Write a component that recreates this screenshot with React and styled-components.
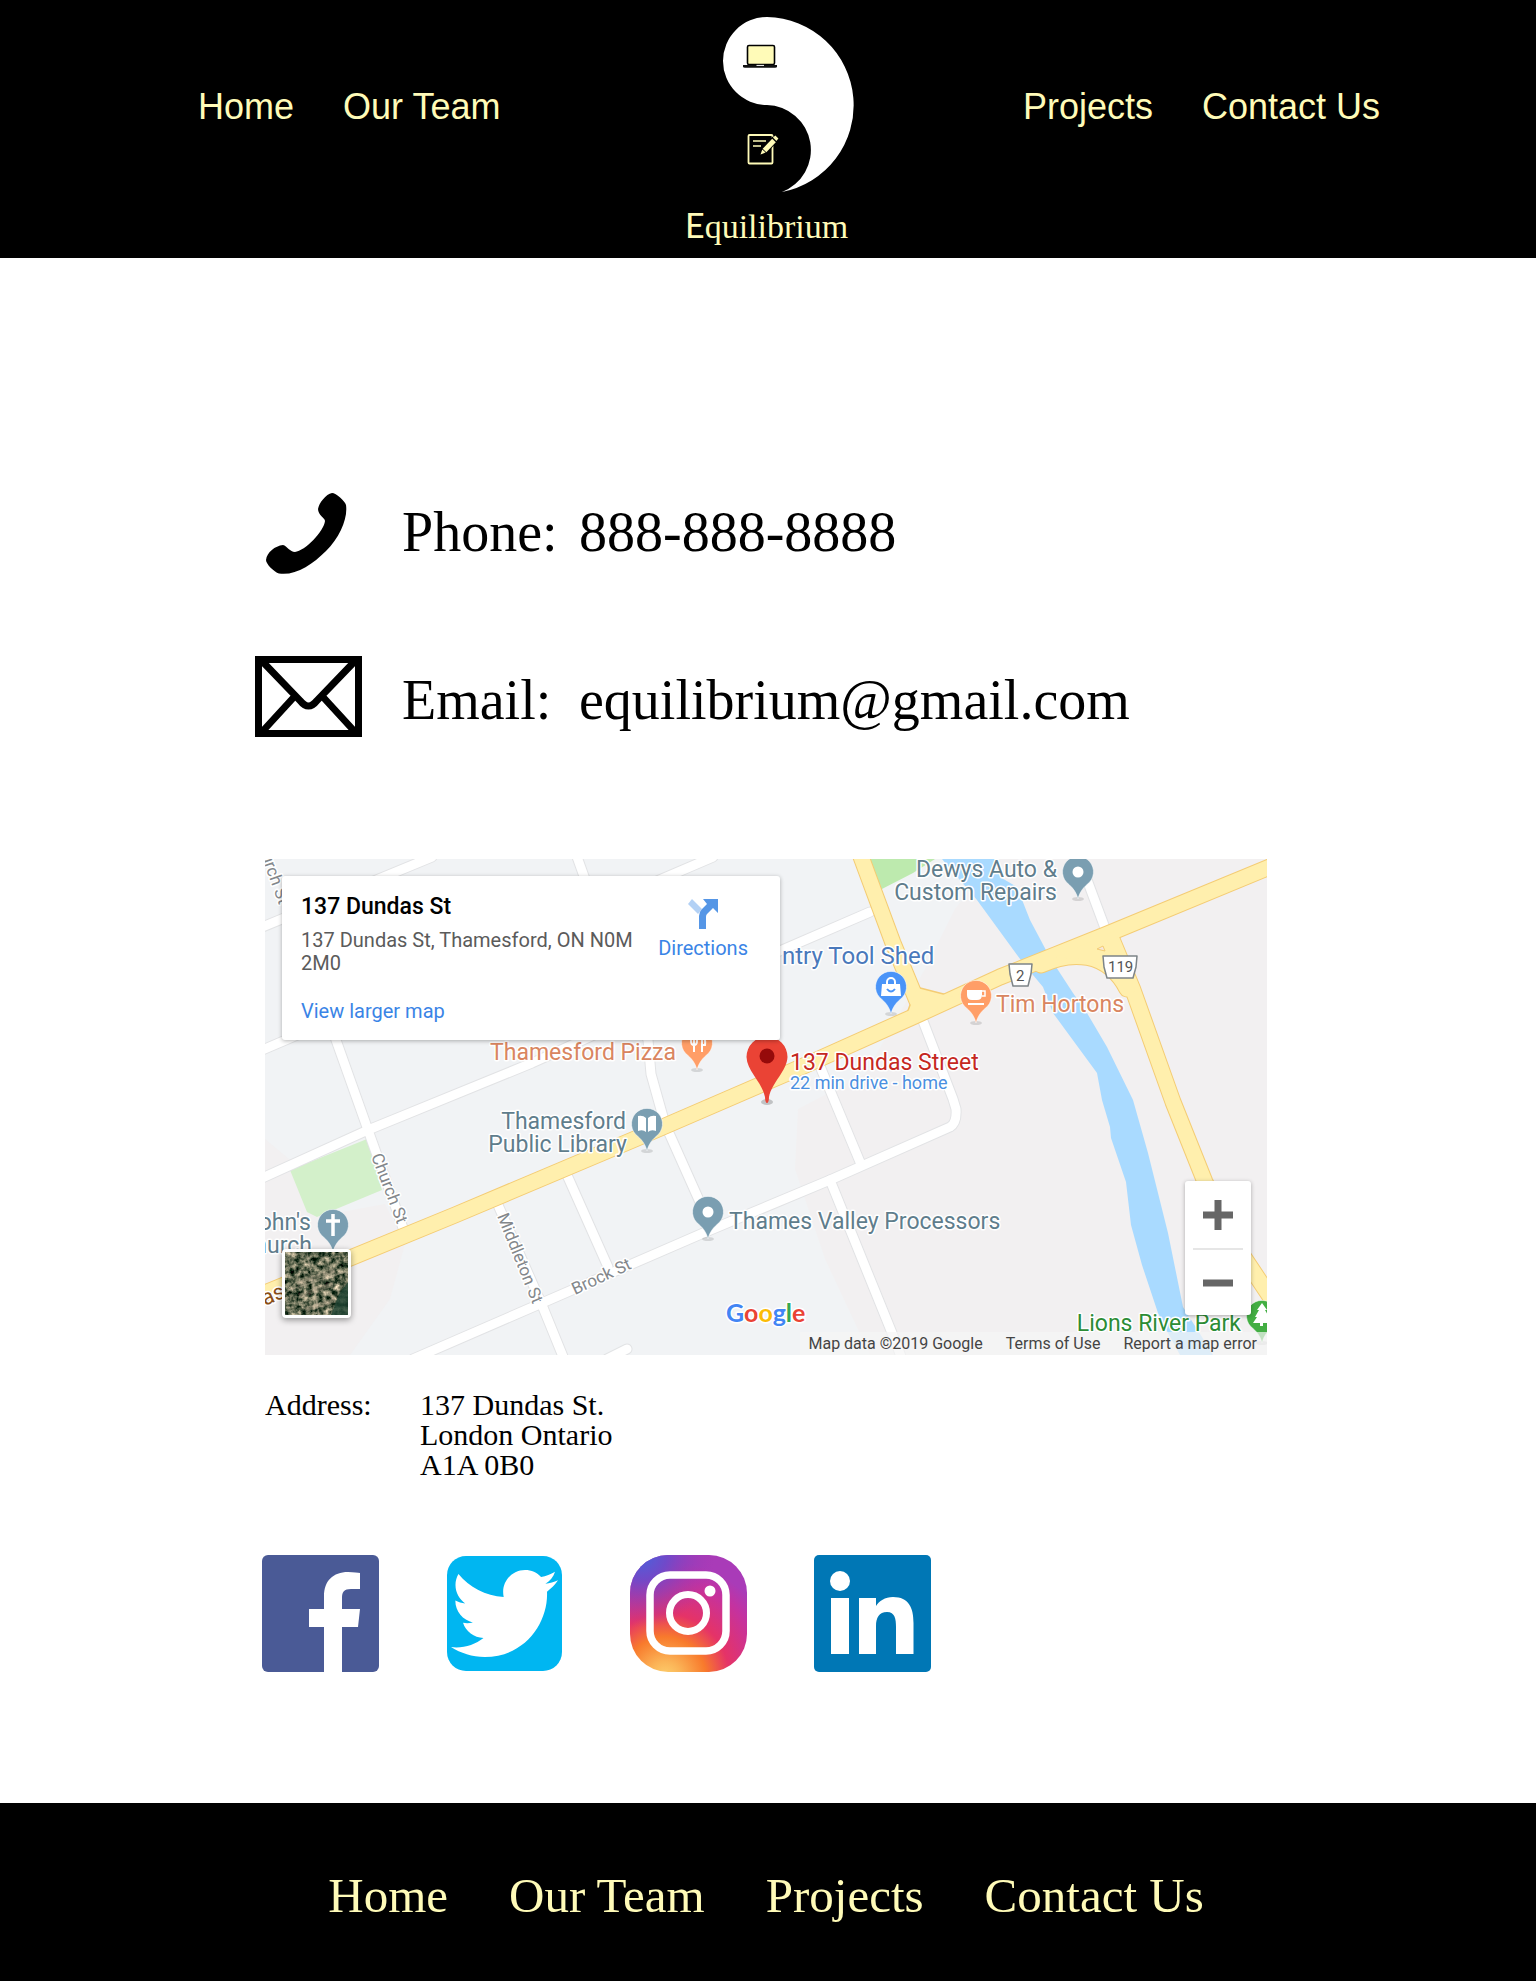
import React from "react";
import styled, { createGlobalStyle } from "styled-components";
import { FaTwitter } from "react-icons/fa";

const cream = "#fffbb8";
const serif = '"Liberation Serif", "Times New Roman", serif';
const sans = '"Liberation Sans", Arial, sans-serif';
const roboto = 'Roboto, "Liberation Sans", sans-serif';

const GlobalStyle = createGlobalStyle`
  *, *::before, *::after { box-sizing: border-box; }
  body { margin: 0; background: #fff; color: #000; font-family: ${serif}; }
  a { color: inherit; text-decoration: none; }
  svg { display: block; }
`;

const Header = styled.header`
  display: grid;
  grid-template-columns: 1fr auto 1fr;
  padding: 17px 156px 12px;
  background: #000;
  color: ${cream};
`;

const HeaderNav = styled.nav`
  display: flex;
  justify-content: ${(p) => (p.$end ? "flex-end" : "flex-start")};
  gap: 49px;
  padding: 70px 0 0 ${(p) => (p.$end ? "0" : "42px")};
  font: 36px/40px ${sans};
  white-space: nowrap;
`;

const Brand = styled.a`
  display: flex;
  flex-direction: column;
  align-items: flex-end;
  gap: 18px;
  width: 172px;
`;

const BrandName = styled.span`
  align-self: flex-start;
  height: 36px;
  padding-left: 3px;
  font: 34px/34px ${serif};
  white-space: nowrap;
`;

const Initial = styled.span`
  font-family: Lato, ${sans};
  line-height: 1px;
`;

const Main = styled.main`
  padding: 235px 269px 131px 255px;
`;

const ContactList = styled.dl`
  display: flex;
  flex-direction: column;
  gap: 82px;
  margin: 0;
`;

const ContactRow = styled.div`
  display: grid;
  grid-template-columns: 147px 177px auto;
  align-items: center;
  font: 56px/64px ${serif};
`;

const IconSlot = styled.div`
  display: flex;
  justify-content: center;
  width: 107px;
`;

const Term = styled.dt`
  margin: 0;
  padding-bottom: 4px;
`;

const Detail = styled.dd`
  margin: 0;
  padding-bottom: 4px;
`;

const MapFrame = styled.section`
  position: relative;
  margin: 112px 0 0 10px;
  overflow: hidden;
  font-family: ${roboto};
`;

const MapSvg = styled.svg`
  width: 100%;
  height: auto;
`;

const PlaceCard = styled.div`
  position: absolute;
  top: 17px;
  left: 17px;
  display: flex;
  justify-content: space-between;
  width: 498px;
  height: 164px;
  padding: 17px 32px 15px 19px;
  border-radius: 3px;
  background: #fff;
  box-shadow: 0 1px 4px rgba(0, 0, 0, 0.3);
`;

const PlaceText = styled.div`
  display: flex;
  flex-direction: column;
  width: 336px;
`;

const PlaceTitle = styled.h2`
  margin: 0 0 8px;
  font-size: 23px;
  line-height: 28px;
  font-weight: 500;
`;

const PlaceAddress = styled.p`
  margin: 0 0 24px;
  font-size: 20px;
  line-height: 23px;
  color: #5b5b5b;
`;

const MapLink = styled.a`
  font-size: 20px;
  line-height: 24px;
  color: #3a84e6;
`;

const Directions = styled.a`
  display: flex;
  flex-direction: column;
  align-items: center;
  gap: 7px;
  padding-top: 6px;
  font-size: 20px;
  line-height: 24px;
  color: #3a84e6;
`;

const ZoomBox = styled.div`
  position: absolute;
  right: 16px;
  bottom: 40px;
  width: 66px;
  padding: 0 8px;
  border-radius: 3px;
  background: #fff;
  box-shadow: 0 1px 4px rgba(0, 0, 0, 0.3);
`;

const ZoomButton = styled.button`
  display: flex;
  align-items: center;
  justify-content: center;
  width: 50px;
  height: 67px;
  padding: 0;
  border: 0;
  background: none;
  & + & { border-top: 2px solid #e6e6e6; }
`;

const SatelliteButton = styled.button`
  position: absolute;
  left: 17px;
  bottom: 37px;
  width: 69px;
  height: 69px;
  padding: 0;
  border: 3px solid #fff;
  border-radius: 4px;
  overflow: hidden;
  background: #4d5f4a;
  box-shadow: 0 2px 6px rgba(0, 0, 0, 0.4);
`;

const Attribution = styled.div`
  position: absolute;
  right: 0;
  bottom: 0;
  display: flex;
  gap: 23px;
  padding: 0 10px 0 8px;
  background: rgba(245, 245, 245, 0.7);
  color: #444;
  font-size: 16px;
  line-height: 23px;
`;

const AddressBlock = styled.div`
  display: grid;
  grid-template-columns: 155px auto;
  margin: 35px 0 0 10px;
  font: 30px/30px ${serif};
`;

const AddressLines = styled.address`
  font-style: normal;
`;

const SocialList = styled.ul`
  display: flex;
  gap: 67px;
  margin: 75px 0 0 7px;
  padding: 0;
  list-style: none;
`;

const Footer = styled.footer`
  padding: 65px 64px 57px 60px;
  background: #000;
  color: ${cream};
`;

const FooterNav = styled.nav`
  display: flex;
  justify-content: center;
  gap: 61px;
  font: 49px/56px ${serif};
`;

const YinMark = () => (
  <svg width="132" height="175" viewBox="0 0 132 175" aria-hidden="true">
    <path d="M45 0A44 44 0 0 0 45 88A45 45 0 0 1 60 175A88.300 88.300 0 0 0 45 0Z" fill="#fff" />
    <rect x="25.5" y="28.5" width="27" height="19" rx="1.5" fill={cream} stroke="#000" strokeWidth="1.6" />
    <path d="M21 48H55V49.5Q55 50.8 53 50.8H23Q21 50.8 21 49.5Z" fill="#111" />
    <path d="M34.5 48.4H42" stroke="#fff" strokeWidth="1" />
    <rect x="26.5" y="118" width="24" height="28.5" rx="1" fill="none" stroke={cream} strokeWidth="1.8" />
    <path d="M31 124H44M31 129H39" stroke={cream} strokeWidth="1.4" />
    <path d="M40.5 135.5L53 122" stroke="#000" strokeWidth="7" />
    <path d="M42.5 133.5L52 123.5" stroke={cream} strokeWidth="5" />
    <path d="M51 120.6L53.4 118.600L56.4 121.5L54.4 124Z" fill={cream} />
    <path d="M38.5 137.5L40.3 132.5L43.6 135.6Z" fill={cream} />
  </svg>
);

const PhoneIcon = () => (
  <svg width="85" height="81" viewBox="0 0 85 81" aria-hidden="true">
    <path d="M66 0C70 0 79 8 80 12C82 25 74 44 60 58C46 72 29 83 13 80.500C8 79 0 71 0 67C1 59 9 53 17 52C21 53 24 59 29 59C39 58 58 38 59 28C59 25 52 22 52 16C53 10 60 1 66 0Z" />
  </svg>
);

const MailIcon = () => (
  <svg width="107" height="91" viewBox="0 0 107 91" fill="none" stroke="#000" strokeWidth="7" aria-hidden="true">
    <rect x="3.5" y="3.5" width="100" height="74" />
    <path d="M6 4L45 44.500Q53.500 55.500 62 44.500L101 4M39 41L6 77M68 41L101 77" />
  </svg>
);

const Facebook = () => (
  <svg width="117" height="117" viewBox="0 0 117 117" aria-hidden="true">
    <rect width="117" height="117" rx="6" fill="#4a5a96" />
    <path d="M62 117V72H47V54H62V41C62 26 71 17 86 17C92 17 96 18 98 18V34H89C82 34 80 37 80 43V54H98L96 72H80V117Z" fill="#fff" />
  </svg>
);

const Twitter = () => (
  <svg width="117" height="117" viewBox="0 0 117 117" aria-hidden="true">
    <rect x="1" y="1" width="115" height="115" rx="19" fill="#00b6f1" />
    <FaTwitter x="5" y="5" size={107} color="#fff" />
  </svg>
);

const Instagram = () => (
  <svg width="117" height="117" viewBox="0 0 117 117" aria-hidden="true">
    <defs>
      <radialGradient id="igWarm" cx="0.3" cy="1.05" r="1">
        <stop offset="0" stopColor="#fdd270" />
        <stop offset="0.14" stopColor="#fbb457" />
        <stop offset="0.35" stopColor="#f87a2c" />
        <stop offset="0.55" stopColor="#e53367" />
        <stop offset="0.85" stopColor="#c432a0" />
        <stop offset="1" stopColor="#a93bb8" />
      </radialGradient>
      <radialGradient id="igCool" cx="0.1" cy="0" r="0.62">
        <stop offset="0" stopColor="#4a62dc" />
        <stop offset="0.35" stopColor="#6a4bcb" stopOpacity="0.9" />
        <stop offset="1" stopColor="#a035b0" stopOpacity="0" />
      </radialGradient>
    </defs>
    <rect width="117" height="117" rx="38" fill="url(#igWarm)" />
    <rect width="117" height="117" rx="38" fill="url(#igCool)" />
    <g fill="none" stroke="#fff">
      <rect x="20" y="20" width="76" height="76" rx="20" strokeWidth="7.500" />
      <circle cx="58" cy="58" r="18.500" strokeWidth="7" />
    </g>
    <circle cx="80" cy="36" r="5.500" fill="#fff" />
  </svg>
);

const LinkedIn = () => (
  <svg width="117" height="117" viewBox="0 0 117 117" aria-hidden="true">
    <rect width="117" height="117" rx="5" fill="#0077b5" />
    <g fill="#fff">
      <circle cx="26" cy="26" r="10" />
      <path d="M17 43H35V99H17ZM45 43H62V51C65 46 71 42 79 42C95 42 99.500 53 99.500 68V99H82V72C82 64 81 57 73 57C65 57 62 63 62 71V99H45Z" />
    </g>
  </svg>
);

const Pin = ({ x, y, color, children }) => (
  <g transform={`translate(${x} ${y})`}>
    <ellipse cx="0" cy="27" rx="6" ry="2" fill="#000" opacity="0.12" />
    <path
      d="M0 27C-1.500 21 -4 17 -9 12.500A15.500 15.500 0 1 1 9 12.500C4 17 1.500 21 0 27Z"
      fill={color}
      stroke="#fff"
      strokeOpacity="0.5"
      strokeWidth="1"
    />
    {children}
  </g>
);

const slate = "#7a9eb1";

const Label = styled.text`
  font-family: ${roboto};
  font-size: ${(p) => p.$size || 23}px;
  font-weight: 400;
  fill: ${(p) => p.$color || "#5f7d8c"};
  stroke: #fff;
  stroke-width: ${(p) => (p.$plain ? 0 : 3)}px;
  stroke-linejoin: round;
  paint-order: stroke;
  text-anchor: ${(p) => (p.$end ? "end" : "start")};
`;

const Wordmark = styled(Label)`
  font-family: Lato, sans-serif;
  font-weight: 700;
`;

const streets = [
  "M-5 69L167 -2",
  "M-5 192L448 -2",
  "M-5 320L103 271L267 204L517 91L605 53",
  "M311 -5L345 90L383 181L386 215L400 265L438 350",
  "M60 150L103 271L138 369",
  "M233 346L277 446L299 500",
  "M302 316L343 408",
  "M148 500L277 444L443 372L565 321L685 268Q692 264 691 250L688 240L658 162",
  "M552 200L595 303",
  "M565 321L627 474L637 500",
  "M342 500L362 490",
  "M821 18L840 69",
];

const highways = [
  "M595 -5L628 84L652 142",
  "M846 78L868 131L908 243L940 323L970 385L1010 445",
  "M776 106C806 92 842 92 862 130",
  "M-5 436L190 356L370 280L525 213L650 157L735 118L840 76L1007 7",
];

const junctions = "M652 129L687 138L705 131L680 146L640 162ZM790 98L850 72L866 110L862 128L842 108L815 100Z";

const CityMap = () => (
  <MapSvg viewBox="0 0 1002 496" role="img" aria-label="Map around 137 Dundas St">
    <defs>
      <clipPath id="mapEdge"><rect width="1002" height="496" /></clipPath>
    </defs>
    <g clipPath="url(#mapEdge)">
      <rect width="1002" height="496" fill="#f1f3f5" />
      <path d="M730 0L690 50L660 110L600 215L533 250L530 310L560 400L605 496H1002V0Z" fill="#f2f0f1" />
      <path d="M0 280L30 305L60 356L120 345L140 385L125 440L85 496H0Z" fill="#f2f0f1" />
      <path d="M603 0L615 31L648 14L670 0Z" fill="#bdeaae" />
      <path d="M25 311L102 280L117 331L52 358L42 353Z" fill="#d3f0ca" />
      <path
        d="M677 0L712 41L758 104L778 128L788 154L832 214L837 241L845 268L846 279L861 323L866 366L877 406L893 454L903 474L915 496H948L937 478L918 448L903 374L883 294L868 241L842 188L822 154L808 134L793 111L782 93L765 61L752 28L735 18L730 0Z"
        fill="#a9daff"
      />
      <g fill="none" strokeLinejoin="round" strokeLinecap="round">
        {streets.map((d) => <path key={d} d={d} stroke="#e2e3e5" strokeWidth="11" />)}
        {streets.map((d) => <path key={d} d={d} stroke="#fff" strokeWidth="9" />)}
        <path d={junctions} stroke="#f4cc74" strokeWidth="3" />
        {highways.map((d) => <path key={d} d={d} stroke="#f4cc74" strokeWidth="17" />)}
        {highways.map((d) => <path key={d} d={d} stroke="#ffefad" strokeWidth="15" />)}
      </g>
      <path d={junctions} fill="#ffefad" />
      <path d="M832 90L838 87L840 92Z" fill="#f6e7dc" stroke="#f4cc74" />

      <g fill="#fff" stroke="#7d8488" strokeWidth="1.500" strokeLinejoin="round">
        <path d="M744 105H767L766 115L763 127H748L745 115Z" />
        <path d="M838 97H872L871 108L868 119H842L839 108Z" />
      </g>
      <Label x="751" y="122" $size={15} $color="#555" $plain>2</Label>
      <Label x="843" y="113" $size={15} $color="#555" $plain>119</Label>

      <Label transform="translate(-11 -23) rotate(70)" $size={17} $color="#83878b">Church St</Label>
      <Label transform="translate(106 297) rotate(69)" $size={17} $color="#83878b">Church St</Label>
      <Label transform="translate(232 357) rotate(68)" $size={17} $color="#83878b">Middleton St</Label>
      <Label transform="translate(310 436) rotate(-25)" $size={17} $color="#83878b">Brock St</Label>
      <Label transform="translate(-47 467) rotate(-23)" $size={22} $color="#8a4f17">Dundas St</Label>

      <Pin x={813} y={13} color={slate}><circle r="5.500" fill="#fff" /></Pin>
      <Pin x={626} y={128} color="#4a94f8">
        <path d="M-9 -3H9L10 9H-10Z" fill="#fff" />
        <path d="M-4 -3V-5A4 4 0 0 1 4 -5V-3" fill="none" stroke="#fff" strokeWidth="2" />
        <path d="M-4 2Q0 7 4 2" fill="none" stroke="#4a94f8" strokeWidth="2" />
      </Pin>
      <Pin x={432} y={184} color="#ff9e67">
        <path d="M-6 -8V-2Q-6 2 -3 2V9M0 -8V-2Q0 2 -3 2M-3 -8V2M5 9V-8Q9 -5 8 2H5" fill="none" stroke="#fff" strokeWidth="2" />
      </Pin>
      <Pin x={711} y={137} color="#ff9e67">
        <path d="M-9 -6H6V-1Q6 4 1 4H-4Q-9 4 -9 -1ZM-8 7H8V9H-8Z" fill="#fff" />
        <path d="M6 -5H9V0H6" fill="none" stroke="#fff" strokeWidth="1.500" />
      </Pin>
      <Pin x={382} y={265} color={slate}>
        <path d="M-9 -8Q-4 -9 -1 -6V8Q-4 5 -9 7ZM9 -8Q4 -9 1 -6V8Q4 5 9 7Z" fill="#fff" />
      </Pin>
      <Pin x={443} y={353} color={slate}><circle r="5.500" fill="#fff" /></Pin>
      <Pin x={68} y={366} color={slate}><path d="M0 -11V11M-7 -4H7" stroke="#fff" strokeWidth="3.500" /></Pin>
      <Pin x={997} y={457} color="#43ae43">
        <path d="M0 -13L5 -6H3L7 1H5L9 7H1V10H-2V7H-9L-5 1H-7L-3 -6H-5Z" fill="#fff" />
      </Pin>
      <g transform="translate(502 198)">
        <ellipse cx="0" cy="45" rx="6" ry="3" fill="#000" opacity="0.2" />
        <path d="M0 46C-1 46 -2 44 -2 40C-5 25 -20 14 -20.500 0A20.500 20.500 0 1 1 20.500 0C20 14 5 25 2 40C2 44 1 46 0 46Z" fill="#ea4335" />
        <circle cy="-1" r="7.500" fill="#960a0a" />
      </g>

      <Label x="792" y="18" $end>Dewys Auto &amp;</Label>
      <Label x="792" y="41" $end>Custom Repairs</Label>
      <Label x="517" y="105" $size={24} $color="#4a79bb">ntry Tool Shed</Label>
      <Label x="731" y="153" $color="#d98560">Tim Hortons</Label>
      <Label x="411" y="201" $end $color="#d98560">Thamesford Pizza</Label>
      <Label x="525" y="211" $color="#c5281f">137 Dundas Street</Label>
      <Label x="525" y="230" $size={18} $color="#4a8fe0">22 min drive - home</Label>
      <Label x="361" y="270" $end>Thamesford</Label>
      <Label x="362" y="293" $end>Public Library</Label>
      <Label x="464" y="370">Thames Valley Processors</Label>
      <Label x="46" y="371" $end>John&apos;s</Label>
      <Label x="47" y="394" $end>Church</Label>
      <Label x="976" y="472" $end $color="#2c8c35">Lions River Park</Label>

      <Wordmark x="461" y="463" $size={25}>
        <tspan fill="#4285f4">G</tspan>
        <tspan fill="#ea4335">o</tspan>
        <tspan fill="#fbbc05">o</tspan>
        <tspan fill="#4285f4">g</tspan>
        <tspan fill="#34a853">l</tspan>
        <tspan fill="#ea4335">e</tspan>
      </Wordmark>
    </g>
  </MapSvg>
);

const Satellite = () => (
  <svg width="63" height="63" viewBox="0 0 63 63" aria-hidden="true">
    <defs>
      <filter id="ground" x="0" y="0" width="1" height="1" colorInterpolationFilters="sRGB">
        <feTurbulence type="fractalNoise" baseFrequency="0.18" numOctaves="4" seed="8" />
        <feColorMatrix values="1.6 0 0 0 -0.42  1.3 0 0 0 -0.24  1.2 0 0 0 -0.28  0 0 0 0 1" />
      </filter>
    </defs>
    <rect width="63" height="63" filter="url(#ground)" />
    <path d="M46 63L54 42L63 30V63Z" fill="#1f4433" opacity="0.8" />
    <path d="M12 32L50 18M14 44L48 32M20 58L50 48" stroke="#d0b8a4" strokeWidth="5" opacity="0.3" />
    <path d="M4 38L60 20M22 0L34 63" stroke="#c9b8a2" strokeWidth="1.500" opacity="0.4" />
  </svg>
);

const socials = [
  { name: "Facebook", Icon: Facebook },
  { name: "Twitter", Icon: Twitter },
  { name: "Instagram", Icon: Instagram },
  { name: "LinkedIn", Icon: LinkedIn },
];

export default function App() {
  return (
    <>
      <GlobalStyle />
      <Header>
        <HeaderNav aria-label="Main">
          <a href="#home">Home</a>
          <a href="#team">Our Team</a>
        </HeaderNav>
        <Brand href="#home">
          <YinMark />
          <BrandName><Initial>E</Initial>quilibrium</BrandName>
        </Brand>
        <HeaderNav $end aria-label="More">
          <a href="#projects">Projects</a>
          <a href="#contact">Contact Us</a>
        </HeaderNav>
      </Header>

      <Main>
        <ContactList>
          <ContactRow>
            <IconSlot><PhoneIcon /></IconSlot>
            <Term>Phone:</Term>
            <Detail><a href="tel:888-888-8888">888-888-8888</a></Detail>
          </ContactRow>
          <ContactRow>
            <IconSlot><MailIcon /></IconSlot>
            <Term>Email:</Term>
            <Detail><a href="mailto:equilibrium@gmail.com">equilibrium@gmail.com</a></Detail>
          </ContactRow>
        </ContactList>

        <MapFrame>
          <CityMap />
          <PlaceCard>
            <PlaceText>
              <PlaceTitle>137 Dundas St</PlaceTitle>
              <PlaceAddress>137 Dundas St, Thamesford, ON N0M 2M0</PlaceAddress>
              <MapLink href="#map">View larger map</MapLink>
            </PlaceText>
            <Directions href="#directions">
              <svg width="30" height="30" viewBox="0 0 30 30" aria-hidden="true">
                <path d="M4 0L14 10L10 15L0 5Z" fill="#b3d1f5" />
                <path d="M11 30V17Q11 13 14 10L19 5L15 0H30V14L25 9L19 15Q18 16 18 18V30Z" fill="#5596e6" />
              </svg>
              Directions
            </Directions>
          </PlaceCard>
          <SatelliteButton aria-label="Satellite view"><Satellite /></SatelliteButton>
          <ZoomBox>
            <ZoomButton aria-label="Zoom in">
              <svg width="30" height="30" viewBox="0 0 30 30"><path d="M15 0V30M0 15H30" stroke="#666" strokeWidth="7" /></svg>
            </ZoomButton>
            <ZoomButton aria-label="Zoom out">
              <svg width="30" height="30" viewBox="0 0 30 30"><path d="M0 15H30" stroke="#666" strokeWidth="7" /></svg>
            </ZoomButton>
          </ZoomBox>
          <Attribution>
            <span>Map data ©2019 Google</span>
            <a href="#terms">Terms of Use</a>
            <a href="#report">Report a map error</a>
          </Attribution>
        </MapFrame>

        <AddressBlock>
          <span>Address:</span>
          <AddressLines>
            137 Dundas St.<br />London Ontario<br />A1A 0B0
          </AddressLines>
        </AddressBlock>

        <SocialList>
          {socials.map(({ name, Icon }) => (
            <li key={name}><a href={`#${name.toLowerCase()}`} aria-label={name}><Icon /></a></li>
          ))}
        </SocialList>
      </Main>

      <Footer>
        <FooterNav aria-label="Footer">
          <a href="#home">Home</a>
          <a href="#team">Our Team</a>
          <a href="#projects">Projects</a>
          <a href="#contact">Contact Us</a>
        </FooterNav>
      </Footer>
    </>
  );
}
